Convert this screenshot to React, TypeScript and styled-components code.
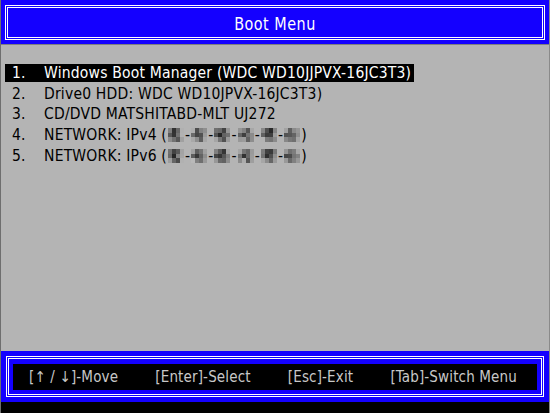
import React from 'react'
import styled, { createGlobalStyle } from 'styled-components'

const FONT = '"DejaVu Sans Condensed", "DejaVu Sans", sans-serif'

const GlobalStyle = createGlobalStyle`
  html, body {
    margin: 0;
    padding: 0;
    background: #b4b4b4;
  }
`

const Screen = styled.div`
  display: flex;
  flex-direction: column;
  width: 550px;
  height: 413px;
  overflow: hidden;
  background: #b4b4b4;
  font-family: ${FONT};
  box-sizing: border-box;
  border-left: 1px solid #6e6e6e;
  border-right: 1px solid #8a8a8a;
`

const Header = styled.div`
  height: 45px;
  padding: 5px 4px 4px 4px;
  box-sizing: border-box;
  background: #1400ff;
  border-bottom: 1px solid #808080;
`

const DoubleFrame = styled.div`
  height: 100%;
  box-sizing: border-box;
  border: 3px double #ffffff;
  display: flex;
  align-items: center;
  justify-content: center;
`

const Title = styled.div`
  color: #ffffff;
  font-size: 16px;
  letter-spacing: 0.5px;
  margin-top: 1px;
  transform: scaleY(1.1);
`

const Body = styled.div`
  flex: 1;
  display: flex;
  flex-direction: column;
  align-items: flex-start;
  padding: 19px 0 0 4px;
`

const Row = styled.div<{ $selected?: boolean }>`
  display: inline-flex;
  align-items: center;
  height: 18px;
  margin-bottom: 2.7px;
  padding: 0 3px 0 7px;
  font-size: 15.5px;
  letter-spacing: 0.2px;
  white-space: nowrap;
  color: ${(p) => (p.$selected ? '#ffffff' : '#000000')};
  background: ${(p) => (p.$selected ? '#000000' : 'transparent')};
`

const Num = styled.span`
  width: 32px;
`

// pixelated MAC address group
const Mosaic = styled.span`
  display: inline-grid;
  grid-template-columns: repeat(4, 4px);
  grid-template-rows: repeat(3, 4.5px);
  margin: 0 1px;
`

const Cell = styled.span<{ $shade: number }>`
  background: rgb(${(p) => `${p.$shade}, ${p.$shade}, ${p.$shade}`});
`

const Footer = styled.div`
  height: 51px;
  padding: 5px 5px;
  box-sizing: border-box;
  background: #1400ff;
`

const FooterFrame = styled.div`
  height: 100%;
  box-sizing: border-box;
  border: 3px double #ffffff;
  padding: 5px 4px 4px 4px;
`

const KeyBar = styled.div`
  height: 100%;
  background: #000000;
  display: flex;
  align-items: center;
  justify-content: space-between;
  padding: 0 20px 0 16px;
  color: #c8c8c8;
  font-size: 15px;
  letter-spacing: 0.15px;
  white-space: nowrap;
`

const BottomStrip = styled.div`
  height: 11px;
  background: #000000;
`

const SHADES = [
  [120, 60, 100, 160, 90, 40, 120, 170, 150, 110, 70, 160],
  [160, 80, 120, 150, 100, 50, 80, 140, 170, 130, 100, 160],
  [120, 100, 50, 150, 70, 40, 90, 120, 160, 100, 80, 140],
  [150, 120, 90, 160, 110, 60, 100, 140, 140, 160, 90, 150],
  [130, 60, 40, 120, 100, 50, 70, 150, 160, 120, 100, 140],
  [150, 100, 130, 160, 80, 70, 100, 130, 140, 110, 120, 160],
]

const MacBlur: React.FC<{ seed: number }> = ({ seed }) => (
  <>
    {SHADES.map((row, i) => (
      <React.Fragment key={i}>
        {i > 0 && '-'}
        <Mosaic>
          {row.map((s, j) => (
            <Cell key={j} $shade={Math.min(190, s + ((seed * 17 + i * 7 + j * 13) % 30) - 10)} />
          ))}
        </Mosaic>
      </React.Fragment>
    ))}
  </>
)

const items = [
  'Windows Boot Manager (WDC WD10JJPVX-16JC3T3)',
  'Drive0 HDD: WDC WD10JPVX-16JC3T3)',
  'CD/DVD MATSHITABD-MLT UJ272',
]

const App: React.FC = () => {
  return (
    <Screen>
      <GlobalStyle />
      <Header>
        <DoubleFrame>
          <Title>Boot Menu</Title>
        </DoubleFrame>
      </Header>
      <Body>
        {items.map((text, i) => (
          <Row key={i} $selected={i === 0}>
            <Num>{i + 1}.</Num>
            {text}
          </Row>
        ))}
        <Row>
          <Num>4.</Num>
          NETWORK: IPv4 (<MacBlur seed={1} />)
        </Row>
        <Row>
          <Num>5.</Num>
          NETWORK: IPv6 (<MacBlur seed={2} />)
        </Row>
      </Body>
      <Footer>
        <FooterFrame>
          <KeyBar>
            <span>[↑ / ↓]-Move</span>
            <span>[Enter]-Select</span>
            <span>[Esc]-Exit</span>
            <span>[Tab]-Switch Menu</span>
          </KeyBar>
        </FooterFrame>
      </Footer>
      <BottomStrip />
    </Screen>
  )
}

export default App
